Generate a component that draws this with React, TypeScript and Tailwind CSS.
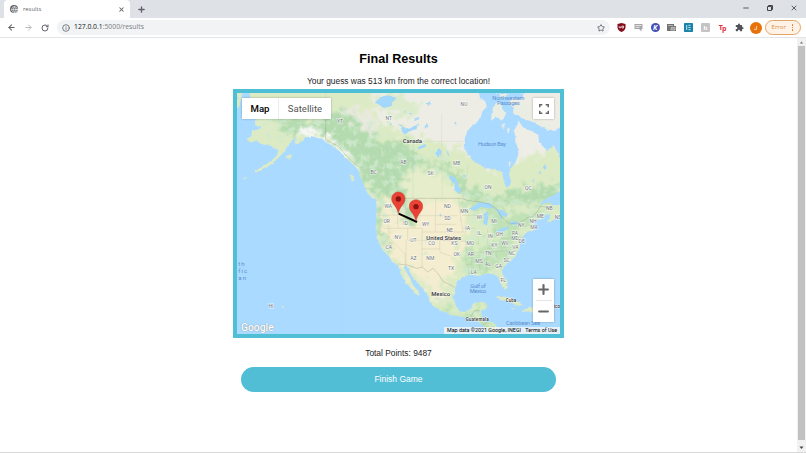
import type { ReactNode } from "react";
import {
  ArrowLeft,
  ArrowRight,
  Globe,
  Info,
  Minus,
  Plus,
  RotateCw,
  Star,
  X,
} from "lucide-react";
import { MdExtension } from "react-icons/md";

type Label = [text: string, x: number, y: number];

const regions: Label[] = [
  ["YT", 321, 105],
  ["NT", 467, 95],
  ["NU", 693, 54],
  ["BC", 422, 257],
  ["AB", 511, 228],
  ["SK", 593, 261],
  ["MB", 671, 232],
  ["ON", 765, 303],
  ["QC", 886, 306],
  ["NB", 949, 366],
  ["ME", 922, 391],
  ["NS", 975, 393],
  ["WA", 466, 361],
  ["OR", 461, 406],
  ["ID", 518, 410],
  ["WY", 578, 415],
  ["ND", 643, 360],
  ["SD", 643, 397],
  ["NE", 650, 433],
  ["MN", 694, 376],
  ["WI", 739, 393],
  ["MI", 783, 406],
  ["IA", 704, 427],
  ["IL", 739, 440],
  ["IN", 772, 449],
  ["OH", 799, 445],
  ["PA", 846, 442],
  ["NY", 865, 416],
  ["NH", 900, 406],
  ["MA", 903, 424],
  ["MD", 846, 456],
  ["DE", 866, 464],
  ["WV", 816, 470],
  ["VA", 847, 483],
  ["KY", 784, 478],
  ["NC", 836, 501],
  ["TN", 766, 500],
  ["SC", 821, 523],
  ["GA", 797, 540],
  ["AL", 765, 533],
  ["MS", 738, 526],
  ["LA", 722, 557],
  ["AR", 713, 504],
  ["MO", 712, 471],
  ["KS", 664, 470],
  ["OK", 671, 503],
  ["TX", 654, 545],
  ["CO", 596, 470],
  ["NM", 592, 515],
  ["AZ", 541, 515],
  ["UT", 541, 462],
  ["NV", 495, 454],
  ["CA", 467, 484],
  ["FL", 811, 583],
  ["HI", 114, 660],
];

const coast =
  "M50 15L55 60L72 95L64 108L75 116L86 110L80 122L58 130L42 158L56 164L70 156L82 170L101 170L124 178L136 186L132 202L118 215L104 226L88 236L66 248L70 253L92 243L112 232L138 208L158 186L166 172L178 158L190 145L184 165L190 170L208 158L218 148L236 144L262 152L284 162L300 176L320 190L334 205L350 220L366 234L378 248L384 270L396 298L410 310L428 324L432 345L430 376L431 420L430 446L440 468L452 490L468 505L478 521L494 530L500 545L506 562L518 584L532 598L546 616L560 625L556 610L540 590L532 572L520 552L512 536L522 535L530 552L546 578L562 595L578 614L586 625L590 641L600 654L620 666L652 678L684 686L704 688L728 696L746 708L768 728L772 738L800 738L790 716L780 702L762 703L744 698L748 682L742 668L760 662L762 645L744 641L722 646L714 662L694 672L678 668L668 650L661 626L666 604L672 580L690 566L714 560L736 564L754 558L768 556L786 560L796 570L804 588L816 604L824 600L822 582L810 560L806 546L822 526L846 508L852 492L860 480L862 460L872 442L886 430L908 426L902 412L904 400L922 394L940 380L952 378L948 394L942 404L960 396L984 376L984 10L50 10Z";

const bays =
  "M792 84L804 98L816 88L832 84L858 100L850 116L842 128L848 146L846 160L854 176L856 200L848 222L834 240L828 258L834 282L828 298L818 296L812 278L808 252L790 246L762 240L738 232L718 216L702 194L692 176L694 152L706 126L722 108L742 92L748 70L762 56L756 38L742 32L738 15L872 15L866 34L838 30L826 46L846 62L842 78L866 90L900 102L928 118L956 128L970 128L984 108L984 208L968 182L962 170L942 190L932 178L918 162L916 140L892 128L868 116L858 100L832 84L816 88ZM914 356L930 338L952 326L984 308L984 350L962 352L950 342L934 346Z";

const lakes =
  "M425 44L442 26L466 22L492 30L476 40L478 54L452 60L444 52ZM498 108L512 118L530 122L560 106L550 124L528 130L514 142L508 128ZM554 178L576 168L580 175L562 184ZM648 262L664 268L684 302L680 318L664 306L666 286L650 274ZM708 362L740 342L770 346L788 360L762 361L746 356L724 368ZM754 376L764 370L766 390L762 412L752 410L750 392ZM784 362L806 366L824 376L820 388L808 382L804 396L798 380ZM788 430L808 420L832 414L824 424L800 434ZM826 408L842 400L860 402L850 410ZM606 196L618 180L626 190L620 210ZM542 100L552 86L558 94ZM574 118L582 104L586 118ZM580 46L592 40L588 54Z";

const provinceLines =
  "M462 331V300L444 250L380 236M540 331V160M628 331L626 160M462 160H702M626 80V160M278 15V90M278 176L370 70M706 230L690 331";

const stateLines =
  "M452 421H568V432H698M524 421V457H658M494 331V402L496 421M467 421V448L516 498L517 528M519 457V531M567 432V539M546 383H607V432M608 331V383H674M608 409H670M620 457V483H566M624 457L700 460M620 483L622 494L654 504M434 382H494M512 331L520 368L546 390V421M676 331L682 382L690 432M687 382H730M690 421H729M700 460V495L760 492M716 495V530H700M704 530L708 560M740 500V548M761 492V550M788 492L796 538M736 430V470M764 423V467M786 425V450M806 430V452L870 448M762 481L846 478M760 492L854 486";

const rugged =
  "M118 95L150 78L220 92L270 96L300 66L360 60L400 80L420 130L440 160L506 160L560 210L640 230L680 262L700 290L790 330L870 302L984 288L984 330L910 345L850 350L760 338L690 325L640 250L560 228L520 255L510 300L534 350L548 398L516 405L500 345L484 331L430 325L396 290L376 232L300 155L245 118L170 135Z";

const eastWoods =
  "M700 338L780 350L830 380L905 372L950 355L940 378L900 390L862 436L830 470L822 520L790 556L738 556L700 555L690 515L704 480L760 476L816 440L770 432L760 365L720 372L694 352Z";

const prairie =
  "M450 340L600 342L690 348L700 420L680 480L656 560L620 600L560 570L510 535L470 500L448 452Z";

function Marker({ x, y }: { x: number; y: number }) {
  return (
    <g transform={`translate(${x} ${y})`}>
      <path
        d="M0 0C-3 -20 -20 -28 -20 -44A20 20 0 0 1 20 -44C20 -28 3 -20 0 0Z"
        fill="#ea4335"
        stroke="#c5352b"
        strokeWidth={1.5}
      />
      <circle cy={-43} r={8} fill="#8b1212" />
    </g>
  );
}

function MapTiles() {
  return (
    <svg
      viewBox="12 15 969 723"
      preserveAspectRatio="none"
      className="block h-full w-full font-[Roboto,sans-serif]"
    >
      <defs>
        <filter id="soft" x="-5%" y="-5%" width="110%" height="110%">
          <feTurbulence type="fractalNoise" baseFrequency="0.05" numOctaves={4} seed={4} />
          <feDisplacementMap in="SourceGraphic" scale={85} xChannelSelector="R" yChannelSelector="G" />
          <feGaussianBlur stdDeviation={2.5} />
        </filter>
        <filter id="rough">
          <feTurbulence type="fractalNoise" baseFrequency="0.08" numOctaves={2} seed={7} />
          <feDisplacementMap in="SourceGraphic" scale={9} xChannelSelector="R" yChannelSelector="G" />
          <feGaussianBlur stdDeviation={0.8} />
        </filter>
        {/* scattered forest cover */}
        <filter id="speckle" x="0" y="0" width="100%" height="100%">
          <feTurbulence type="fractalNoise" baseFrequency="0.045" numOctaves={4} seed={11} />
          <feColorMatrix values="0 0 0 0 0.63  0 0 0 0 0.82  0 0 0 0 0.62  5 0 0 0 -2.5" />
          <feComposite in2="SourceGraphic" operator="in" />
          <feGaussianBlur stdDeviation={1.5} />
        </filter>
        <clipPath id="land">
          <path d={coast} />
        </clipPath>
      </defs>

      <rect x={0} y={0} width={1000} height={760} fill="#aadaff" />
      <path d="M328 15V738" stroke="#a3d3f7" strokeWidth={1} />
      <g filter="url(#rough)">
        <path d={coast} fill="#dcebc4" />
        <g clipPath="url(#land)">
          <g filter="url(#soft)">
            <path d="M400 -40H1040V130L850 220L780 250L700 190L600 160L500 130L430 90Z" fill="#ededE5" />
            <path d="M860 110L930 160L920 200L870 215Z" fill="#eeeee7" />
            <path d={prairie} fill="#f5edcf" />
            <path d="M510 250L600 255L670 300L690 345H560L520 330Z" fill="#e6edcb" />
            <path d={rugged} fill="#b4dbaf" />
            <path d={eastWoods} fill="#bfe1b5" />
            <path d="M436 330L448 335L442 400L458 440L484 480L470 484L440 450L428 410Z" fill="#b3dbae" />
            <path d="M320 64L360 52L420 84L432 140L405 130L370 96Z" fill="#e9e9de" />
            <path d="M190 128L225 114L280 142L340 186L378 234L366 236L330 198L270 156L200 146Z" fill="#f7f8f5" />
            <path d="M425 20L500 15L560 60L540 90L470 80Z" fill="#dcebcb" />
            <path d="M556 560L620 580L640 640L610 650L580 600Z" fill="#f2ecd2" />
            <path d="M512 540L562 620L550 615L520 580Z" fill="#efeccf" />
            <path d="M585 635L640 664L720 682L780 700L790 738L740 720L650 680Z" fill="#bce0b0" />
            <path d="M720 646L762 644L758 664L730 670Z" fill="#c4e4b4" />
            <path d="M65 60L130 80L110 160L70 150Z" fill="#dcebc6" />
          </g>
          <path
            d="M60 60L300 60L420 90L500 150L640 200L700 270L800 310L984 270V400L860 480L800 560H690L700 340L640 270L520 250L510 330L560 400L520 420L430 380L380 240L280 150L120 180ZM450 420L480 500L460 500L430 440ZM600 630L800 640V738H740L610 670ZM560 440L580 440L590 500L560 500Z"
            filter="url(#speckle)"
            opacity={0.75}
          />
        </g>
        <path
          d="M12 15H28L24 34L18 58L12 60ZM158 208L172 198L178 204L166 212ZM28 273L44 266L46 268L30 275ZM350 260L358 260L364 278L356 280ZM396 304L410 310L432 330L424 334L408 322ZM786 630L806 624L832 630L856 642L870 652L850 652L826 640L800 636ZM866 668L890 656L930 662L944 672L912 676ZM146 653L153 656L151 661L146 660ZM832 658L846 662L840 665Z"
          fill="#dbe9c8"
        />
        <path d={bays} fill="#aadaff" />
        <path
          d="M780 56L790 44L800 42L808 62L820 78L812 92L796 84L784 88L774 98L776 78ZM806 108L816 106L814 120L806 116ZM842 56L868 44L896 60L910 84L948 112L956 126L940 124L908 106L888 92L856 82L840 74ZM800 18L824 18L820 28L802 28ZM822 124L830 118L828 134L822 134ZM826 224L834 220L830 236Z"
          fill="#eaede2"
        />
        <path d={lakes} fill="#a3d7fb" />
        <path
          d="M934 228L940 234L938 246L930 240ZM916 252L924 250L922 260ZM640 186L648 196L646 206ZM470 104L478 106L474 114ZM664 106L668 100L670 112ZM528 78L536 74L534 84ZM898 276L904 272L902 282ZM618 374L626 380L622 386ZM692 262L698 260L696 270ZM510 70L518 68L516 76Z"
          fill="#a3d7fb"
        />
      </g>
      <path d={provinceLines} fill="none" stroke="#a0a48f" strokeOpacity={0.25} strokeWidth={1.5} />
      <path d={stateLines} fill="none" stroke="#a0a48f" strokeOpacity={0.38} strokeWidth={1.5} />
      <path
        d="M496 528L522 531L552 541L568 537L584 552L600 541L616 558L630 580L646 588L665 598M490 331H684L706 338L738 341L766 347L790 362L808 390L830 408L858 404L886 388L900 386L912 372L922 355L938 357M278 90V155L318 176L340 204L374 236M712 690L724 668L740 668M748 712L762 702"
        fill="none"
        stroke="#7f8b74"
        strokeOpacity={0.5}
        strokeWidth={1.8}
      />

      <g fontSize={15} textAnchor="middle" fill="#6f777c" stroke="#fff" strokeWidth={3.5} strokeOpacity={0.75} paintOrder="stroke">
        {regions.map(([text, x, y]) => (
          <text key={text} x={x} y={y}>
            {text}
          </text>
        ))}
      </g>
      <g fill="#5b8fd0" fontSize={17} textAnchor="middle">
        <text x={826} y={35} textLength={96}>Northwestern</text>
        <text x={826} y={50} textLength={68}>Passages</text>
        <text x={777} y={173} textLength={84}>Hudson Bay</text>
        <text x={735} y={601} textLength={46}>Gulf of</text>
        <text x={735} y={616} textLength={50}>Mexico</text>
        <text x={870} y={711} textLength={102}>Caribbean Sea</text>
      </g>
      <g fill="#5b8fd0" fontSize={18} letterSpacing={3.2}>
        <text x={16} y={535}>th</text>
        <text x={16} y={556}>fic</text>
        <text x={16} y={576}>an</text>
      </g>
      <g fill="#333" textAnchor="middle" fontWeight={500} stroke="#fff" strokeWidth={3} strokeOpacity={0.7} paintOrder="stroke">
        <text x={538} y={165} fontSize={18} textLength={58}>Canada</text>
        <text x={632} y={455} fontSize={18} textLength={104}>United States</text>
        <text x={623} y={623} fontSize={18} textLength={57}>Mexico</text>
        <text x={834} y={643} fontSize={14} textLength={32}>Cuba</text>
        <text x={733} y={698} fontSize={14} textLength={69}>Guatemala</text>
        <text x={972} y={660} fontSize={14}>ico</text>
      </g>

      <path d="M497 377L552 402" stroke="#000" strokeWidth={6} />
      <Marker x={496} y={376} />
      <Marker x={549} y={399} />
    </svg>
  );
}

function GuessMap() {
  return (
    <div className="relative h-[249px] w-[331px] border-4 border-[#4fbfd6] font-[Roboto,sans-serif]">
      <MapTiles />
      <div className="absolute top-[5px] left-[5px] flex h-[21px] bg-white text-[9.6px] leading-[21px] shadow-[0_0_2px_rgba(0,0,0,0.3)]">
        <span className="w-[37px] border-r border-[#ececec] text-center font-medium text-black">Map</span>
        <span className="w-[52px] text-center text-[#565656]">Satellite</span>
      </div>
      <div className="absolute top-[5px] right-[6px] flex size-[21px] items-center justify-center bg-white shadow-[0_0_2px_rgba(0,0,0,0.3)]">
        <svg viewBox="0 0 10 10" className="size-[10px]" fill="none" stroke="#666" strokeWidth={1.5}>
          <path d="M.75 3.3V.75H3.3M6.7 .75H9.25V3.3M9.25 6.7V9.25H6.7M3.3 9.25H.75V6.7" />
        </svg>
      </div>
      <div className="absolute right-[6px] bottom-3 flex h-[43px] w-[21px] flex-col items-center bg-white text-[#666] shadow-[0_0_2px_rgba(0,0,0,0.3)]">
        <div className="flex flex-1 items-center">
          <Plus size={15} strokeWidth={3.4} />
        </div>
        <div className="h-px w-4 bg-[#e6e6e6]" />
        <div className="flex flex-1 items-center">
          <Minus size={15} strokeWidth={3.4} />
        </div>
      </div>
      <span className="absolute -bottom-px left-1 text-[10.3px] leading-[14px] font-medium text-white [text-shadow:0_0_1px_#777]">
        Google
      </span>
      <div className="absolute right-0 bottom-0 flex h-[7px] w-[116px] items-center justify-between bg-[#f5f5f5]/80 pr-[3px] pl-[3px] text-[5.35px] leading-[7px] whitespace-nowrap text-black">
        <span>Map data ©2021 Google, INEGI</span>
        <span>Terms of Use</span>
      </div>
    </div>
  );
}

function Extension({ className, children }: { className: string; children?: ReactNode }) {
  return (
    <span className={`flex size-[9px] items-center justify-center leading-none font-bold ${className}`}>
      {children}
    </span>
  );
}

function BrowserBar() {
  return (
    <header className="h-[38px] shrink-0 border-b border-[#e3e4e6] bg-white font-['Open_Sans',sans-serif] text-[#5f6368]">
      <div className="flex h-[18px] items-end bg-[#dee1e6] pl-1">
        <div className="flex h-[18px] w-[126px] items-center rounded-t-[4px] bg-white pr-[5px] pl-[6px]">
          <span className="flex size-2 items-center justify-center rounded-full bg-[#5f6368] text-white">
            <Globe size={7} strokeWidth={2} />
          </span>
          <span className="ml-[5px] text-[5.8px]">results</span>
          <X className="ml-auto" size={7} strokeWidth={3.5} />
        </div>
        <Plus className="mb-1 ml-[7px]" size={9} strokeWidth={3.5} />
        <div className="mr-2 mb-[6px] ml-auto flex items-center gap-[16px] text-[#444]">
          <Minus size={8} strokeWidth={2.6} />
          <svg viewBox="0 0 8 8" className="size-2" fill="none" stroke="currentColor" strokeWidth={1}>
            <path d="M1.5 2.5H5.5V6.5H1.5ZM2.5 2.5V1.5H6.5V5.5H5.5" />
          </svg>
          <X size={8} strokeWidth={2.5} />
        </div>
      </div>
      <div className="flex h-[19px] items-center">
        <ArrowLeft className="ml-[7px]" size={9} strokeWidth={2.8} />
        <ArrowRight className="ml-2 text-[#b5b8bb]" size={9} strokeWidth={2.6} />
        <RotateCw className="ml-[8px]" size={8} strokeWidth={3} />
        <div className="ml-2 flex h-[15px] w-[553px] items-center rounded-full bg-[#f1f3f4] pr-[5px] pl-[5px]">
          <Info size={8} strokeWidth={2.4} />
          <span className="ml-[4px] text-[6.8px] leading-none text-[#7b7f83]">
            <span className="text-[#202124]">127.0.0.1</span>:5000/results
          </span>
          <Star className="ml-auto" size={8} strokeWidth={2.6} />
        </div>
        <div className="ml-[7px] flex items-center gap-[7.8px]">
          <svg viewBox="0 0 9 9" className="size-[9px]">
            <path d="M4.5 0L8.5 1V4.5Q8 7.5 4.5 9Q1 7.5.5 4.5V1Z" fill="#860b18" />
            <path d="M2.2 3V4.7H4V3M5 3H6.5V5H5Z" fill="none" stroke="#fff" strokeWidth={0.7} />
          </svg>
          <svg viewBox="0 0 9 9" className="size-[9px]">
            <path d="M.5 1H8.5V6H7.5V8.5L5 6H.5Z" fill="#a7a7a7" />
            <path d="M1.5 2.5H7.5M1.5 4.3H5.5" stroke="#f3f3f3" strokeWidth={0.8} />
          </svg>
          <Extension className="rounded-full bg-[#4350b5] text-[7px] text-white italic">K</Extension>
          <svg viewBox="0 0 9 9" className="size-[9px]">
            <path d="M0 1H7V3H9V8H0Z" fill="#737373" />
            <path d="M1 2.5H6M4 4.5H8V7H4Z" fill="#999" stroke="#ddd" strokeWidth={0.6} />
          </svg>
          <svg viewBox="0 0 9 9" className="size-[9px]">
            <rect width={9} height={9} rx={0.7} fill="#1783a8" />
            <path d="M2.7 2V7M4.4 2.3H6.6M4.4 4.5H6.6M4.4 6.7H6.6" stroke="#d9f2fa" strokeWidth={0.9} />
          </svg>
          <Extension className="rounded-[1px] bg-[#c4c4c4] text-[6px] text-white">h</Extension>
          <Extension className="text-[7px] tracking-[-0.6px] text-[#e5303a]">
            <span className="-mt-px">T</span>
            <span className="mt-[2px]">p</span>
          </Extension>
          <MdExtension size={9} color="#4f5357" />
        </div>
        <span className="ml-[6px] flex size-3 items-center justify-center rounded-full bg-[#e8710a] font-[Roboto,sans-serif] text-[6px] text-white">
          J
        </span>
        <div className="ml-[3px] flex h-[15px] w-9 items-center rounded-full border border-[#e3a566] bg-[#fef3e6] pl-[6px] text-[6px] text-[#e18a3c]">
          Error
          <span className="ml-[6px] flex flex-col gap-[1.2px]">
            <i className="size-[1.4px] rounded-full bg-[#e8710a]" />
            <i className="size-[1.4px] rounded-full bg-[#e8710a]" />
            <i className="size-[1.4px] rounded-full bg-[#e8710a]" />
          </span>
        </div>
      </div>
    </header>
  );
}

function Scrollbar() {
  return (
    <div className="flex w-[9px] flex-col items-center bg-[#f1f1f1]">
      <svg viewBox="0 0 9 8" className="h-2 w-[9px]">
        <path d="M2.8 5.5L4.5 3.5L6.2 5.5Z" fill="#777" />
      </svg>
      <div className="w-[7px] flex-1 bg-[#c1c1c1]" />
      <svg viewBox="0 0 9 12" className="h-3 w-[9px]">
        <path d="M2.5 6.5H6.5L4.5 9Z" fill="#444" />
      </svg>
    </div>
  );
}

export default function App() {
  return (
    <div className="flex h-[453px] w-[806px] flex-col overflow-hidden border-b border-[#d8d8d8] bg-white">
      <BrowserBar />
      <div className="flex min-h-0 flex-1">
        <main className="flex flex-1 flex-col items-center font-['Liberation_Sans',sans-serif] text-[8.4px] text-[#222]">
          <h1 className="mt-[13px] text-[12.6px] leading-4 font-bold text-black">Final Results</h1>
          <p className="mt-[9px] mb-[3px] leading-[10px]">Your guess was 513 km from the correct location!</p>
          <GuessMap />
          <p className="mt-[10px] leading-[10px]">Total Points: 9487</p>
          <button className="mt-[9px] h-[25px] w-[315px] rounded-full bg-[#52bed6] text-[8.5px] text-white">
            Finish Game
          </button>
        </main>
        <Scrollbar />
      </div>
    </div>
  );
}
